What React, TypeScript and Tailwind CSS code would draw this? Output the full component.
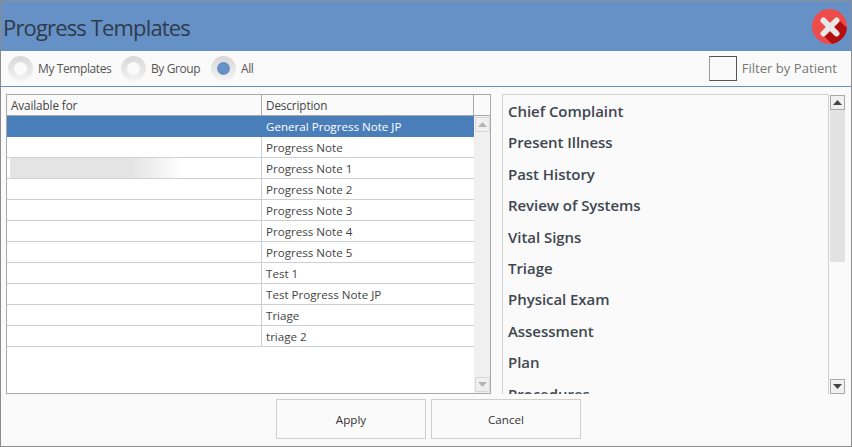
import { X } from "lucide-react"

const rows = [
  "General Progress Note JP",
  "Progress Note",
  "Progress Note 1",
  "Progress Note 2",
  "Progress Note 3",
  "Progress Note 4",
  "Progress Note 5",
  "Test 1",
  "Test Progress Note JP",
  "Triage",
  "triage 2",
]

const sections = [
  "Chief Complaint",
  "Present Illness",
  "Past History",
  "Review of Systems",
  "Vital Signs",
  "Triage",
  "Physical Exam",
  "Assessment",
  "Plan",
  "Procedures",
]

const Radio = ({ label, checked }: { label: string; checked?: boolean }) => (
  <div className="flex items-center gap-[5px]">
    <div className="w-[25px] h-[25px] shrink-0 rounded-full bg-gradient-to-b from-[#d8d8d8] to-[#f4f4f4] flex items-center justify-center">
      <div className={checked ? "w-[13px] h-[13px] rounded-full bg-[#6691c7]" : "w-[13px] h-[13px] rounded-full bg-[#fafafa]"} />
    </div>
    <span className="text-[12px] tracking-[-0.4px] whitespace-nowrap text-[#555]">{label}</span>
  </div>
)

const Arrow = ({ up, light }: { up?: boolean; light?: boolean }) => (
  <svg width="9" height="5" viewBox="0 0 9 5">
    <path d={up ? "M4.5 0L9 5H0Z" : "M0 0H9L4.5 5Z"} fill={light ? "#b5b5b5" : "#444"} />
  </svg>
)

const App = () => {
  return (
    <div className="w-[852px] h-[447px] overflow-hidden bg-[#fafafa] border border-[#8c8c8c] flex flex-col font-['Open_Sans',sans-serif]">
      <div className="h-[50px] shrink-0 bg-[#6691c7] flex items-center justify-between pl-[2px] pr-[4px]">
        <span className="text-[22px] tracking-[-0.85px] text-[#2f3b4a] leading-none pt-[1px]">Progress Templates</span>
        <div className="relative w-[35px] h-[35px] rounded-full bg-[#ee4b4b] overflow-hidden flex items-center justify-center mt-[1px]">
          <svg className="absolute inset-0" width="35" height="35" viewBox="0 0 35 35">
            <path d="M24 8L35 19V35H20L9 24Z" fill="#b30f0f" />
          </svg>
          <X size={26} strokeWidth={5.5} color="#e8e8e8" className="relative" />
        </div>
      </div>

      <div className="h-[36px] shrink-0 border-b border-[#6691c7] flex items-center justify-between pl-[7px] pr-[14px]">
        <div className="flex items-center">
          <div className="w-[113px]"><Radio label="My Templates" /></div>
          <div className="w-[90px]"><Radio label="By Group" /></div>
          <Radio label="All" checked />
        </div>
        <div className="flex items-center gap-[5px]">
          <div className="w-[28px] h-[25px] border border-[#555] border-l-[#999] bg-[#fafafa]" />
          <span className="text-[13.1px] text-[#777]">Filter by Patient</span>
        </div>
      </div>

      <div className="h-[300px] mt-[7px] shrink-0 flex pl-[5px]">
        <div className="w-[485px] h-full shrink-0 border border-[#a9a9a9] bg-white flex flex-col">
          <div className="h-[21px] shrink-0 flex border-b border-[#a9a9a9] bg-[#fafafa] text-[11.7px] tracking-[-0.1px] text-[#444] leading-[21px]">
            <div className="w-[255px] pl-[4px] border-r border-[#a9a9a9]">Available for</div>
            <div className="w-[212px] pl-[4px] border-r border-[#a9a9a9]">Description</div>
          </div>
          <div className="flex flex-1 min-h-0">
            <div className="w-[467px]">
              {rows.map((row, i) => (
                <div
                  key={row}
                  className={
                    i === 0
                      ? "h-[21px] flex bg-[#4a7eba] text-white text-[11.6px] leading-[22px]"
                      : "h-[21px] flex border-b border-[#ccd0d6] text-[#444] text-[11.6px] leading-[22px]"
                  }
                >
                  <div className={i === 0 ? "w-[255px] flex items-center pl-[3px]" : "w-[255px] flex items-center pl-[3px] border-r border-[#ccd0d6]"}>
                    {i === 2 && <div className="w-[173px] h-[20px] bg-gradient-to-r from-[#e4e4e4] from-70% to-white" />}
                  </div>
                  <div className="pl-[4px]">{row}</div>
                </div>
              ))}
            </div>
            <div className="flex-1 bg-[#f0f0f0] flex flex-col justify-between items-center py-[1px]">
              <div className="w-[15px] h-[15px] border border-[#d8d8d8] flex items-center justify-center"><Arrow up light /></div>
              <div className="w-[15px] h-[15px] border border-[#d8d8d8] flex items-center justify-center"><Arrow light /></div>
            </div>
          </div>
        </div>

        <div className="ml-[11px] w-[326px] h-full border-t border-l border-[#d0d0d0] overflow-hidden pl-[5px] pt-[7px] font-semibold text-[15px] tracking-[-0.05px] text-[#3f4650]">
          {sections.map((section) => (
            <div key={section} className="h-[31.4px] leading-[19px]">{section}</div>
          ))}
        </div>
        <div className="w-[18px] h-full border-l border-[#d0d0d0] flex flex-col items-center pt-[1px]">
          <div className="w-[15px] h-[15px] shrink-0 border border-[#a9a9a9] bg-[#f0f0f0] flex items-center justify-center"><Arrow up /></div>
          <div className="w-[15px] h-[152px] shrink-0 bg-[#e2e2e2]" />
          <div className="w-[15px] flex-1" />
          <div className="w-[15px] h-[15px] shrink-0 border border-[#a9a9a9] bg-[#f0f0f0] flex items-center justify-center"><Arrow /></div>
        </div>
      </div>

      <div className="flex gap-[5px] mt-[5px] pl-[275px]">
        <button className="w-[150px] h-[40px] pt-[2px] border border-[#cfcfcf] text-[11.6px] text-[#333]">Apply</button>
        <button className="w-[150px] h-[40px] pt-[2px] border border-[#cfcfcf] text-[11.6px] text-[#333]">Cancel</button>
      </div>
    </div>
  )
}

export default App
